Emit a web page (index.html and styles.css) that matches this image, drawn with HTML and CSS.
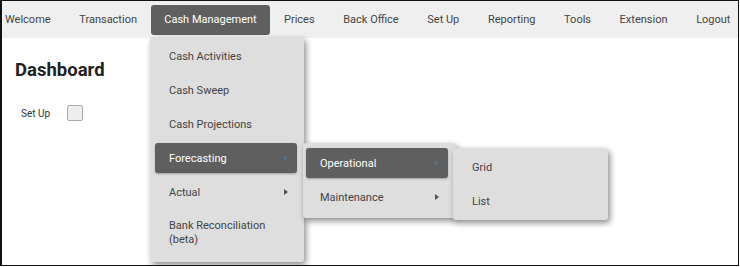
FILE: index.html
```html
<!DOCTYPE html>
<html lang="en">
  <head>
    <meta charset="UTF-8" />
    <title>Dashboard</title>
    <link rel="stylesheet" href="styles.css">
  </head>
  <body>
    <div class="frame">
      <nav class="topnav">
        <a class="nav-item first">Welcome</a>
        <a class="nav-item">Transaction</a>
        <a class="nav-item active">Cash Management</a>
        <a class="nav-item">Prices</a>
        <a class="nav-item">Back Office</a>
        <a class="nav-item">Set Up</a>
        <a class="nav-item">Reporting</a>
        <a class="nav-item">Tools</a>
        <a class="nav-item">Extension</a>
        <a class="nav-item">Logout</a>
      </nav>

      <main class="content">
        <h1>Dashboard</h1>
        <label class="setup-row">
          <span>Set Up</span>
          <span class="checkbox"></span>
        </label>
      </main>

      <ul class="menu menu-cash">
        <li class="menu-item">Cash Activities</li>
        <li class="menu-item">Cash Sweep</li>
        <li class="menu-item">Cash Projections</li>
        <li class="menu-item selected has-sub">Forecasting</li>
        <li class="menu-item has-sub">Actual</li>
        <li class="menu-item tall">Bank Reconciliation<br>(beta)</li>
      </ul>

      <ul class="menu menu-forecast">
        <li class="menu-item selected has-sub">Operational</li>
        <li class="menu-item has-sub">Maintenance</li>
      </ul>

      <ul class="menu menu-operational">
        <li class="menu-item">Grid</li>
        <li class="menu-item">List</li>
      </ul>
    </div>
  </body>
</html>
```

FILE: styles.css
```css
* {
  margin: 0;
  padding: 0;
  box-sizing: border-box;
}
body {
  background: #fff;
  font-family: Roboto, "Liberation Sans", sans-serif;
  color: #444;
}
.frame {
  position: relative;
  width: 739px;
  height: 266px;
  border: 1px solid #111;
  border-left-width: 2px;
  overflow: hidden;
}
.topnav {
  display: flex;
  align-items: center;
  height: 37px;
  background: #efefef;
}
.nav-item {
  display: flex;
  align-items: center;
  flex-shrink: 0;
  height: 30px;
  padding: 0 14.3px;
  font-size: 11px;
  white-space: nowrap;
  color: #454545;
  border-radius: 3px;
}
.nav-item.first {
  padding-left: 3px;
}
.nav-item.active {
  background: #5f5f5f;
  color: #fff;
  padding: 0 13px;
}
.content {
  padding: 21px 13px;
}
h1 {
  font-size: 18.5px;
  font-weight: bold;
  color: #222;
}
.setup-row {
  display: flex;
  align-items: center;
  gap: 17px;
  margin-top: 24px;
  padding-left: 6px;
  font-size: 10px;
  color: #333;
}
.checkbox {
  width: 16px;
  height: 16px;
  border: 1px solid #aaa;
  border-radius: 2px;
  background: #eee;
}
.menu {
  position: absolute;
  list-style: none;
  background: #dedede;
  border-radius: 3px;
  box-shadow: 2px 3px 6px rgba(0, 0, 0, 0.45);
}
.menu-item {
  position: relative;
  display: flex;
  align-items: center;
  height: 30px;
  margin-bottom: 4px;
  padding-left: 14px;
  font-size: 11px;
  color: #444;
  border-radius: 3px;
}
.menu-item:last-child {
  margin-bottom: 0;
}
.menu-item.tall {
  height: 44px;
  line-height: 14px;
}
.menu-item.selected {
  background: #5f5f5f;
  color: #fff;
  box-shadow: 0 1px 2px rgba(0, 0, 0, 0.3);
}
.has-sub::after {
  content: "";
  position: absolute;
  right: 9px;
  top: 12px;
  border-left: 4px solid #555;
  border-top: 3px solid transparent;
  border-bottom: 3px solid transparent;
}
.selected.has-sub::after {
  border-left-color: #5a7088;
}
.menu-cash {
  left: 148px;
  top: 36px;
  width: 154px;
  padding: 4px 7px 7px 5px;
  z-index: 1;
}
.menu-forecast {
  left: 301px;
  top: 142px;
  width: 153px;
  padding: 5px 8px 6px 3px;
  z-index: 2;
}
.menu-operational {
  left: 451px;
  top: 147px;
  width: 155px;
  padding: 4px;
  z-index: 3;
}
.menu-operational .menu-item {
  padding-left: 15px;
}
```
